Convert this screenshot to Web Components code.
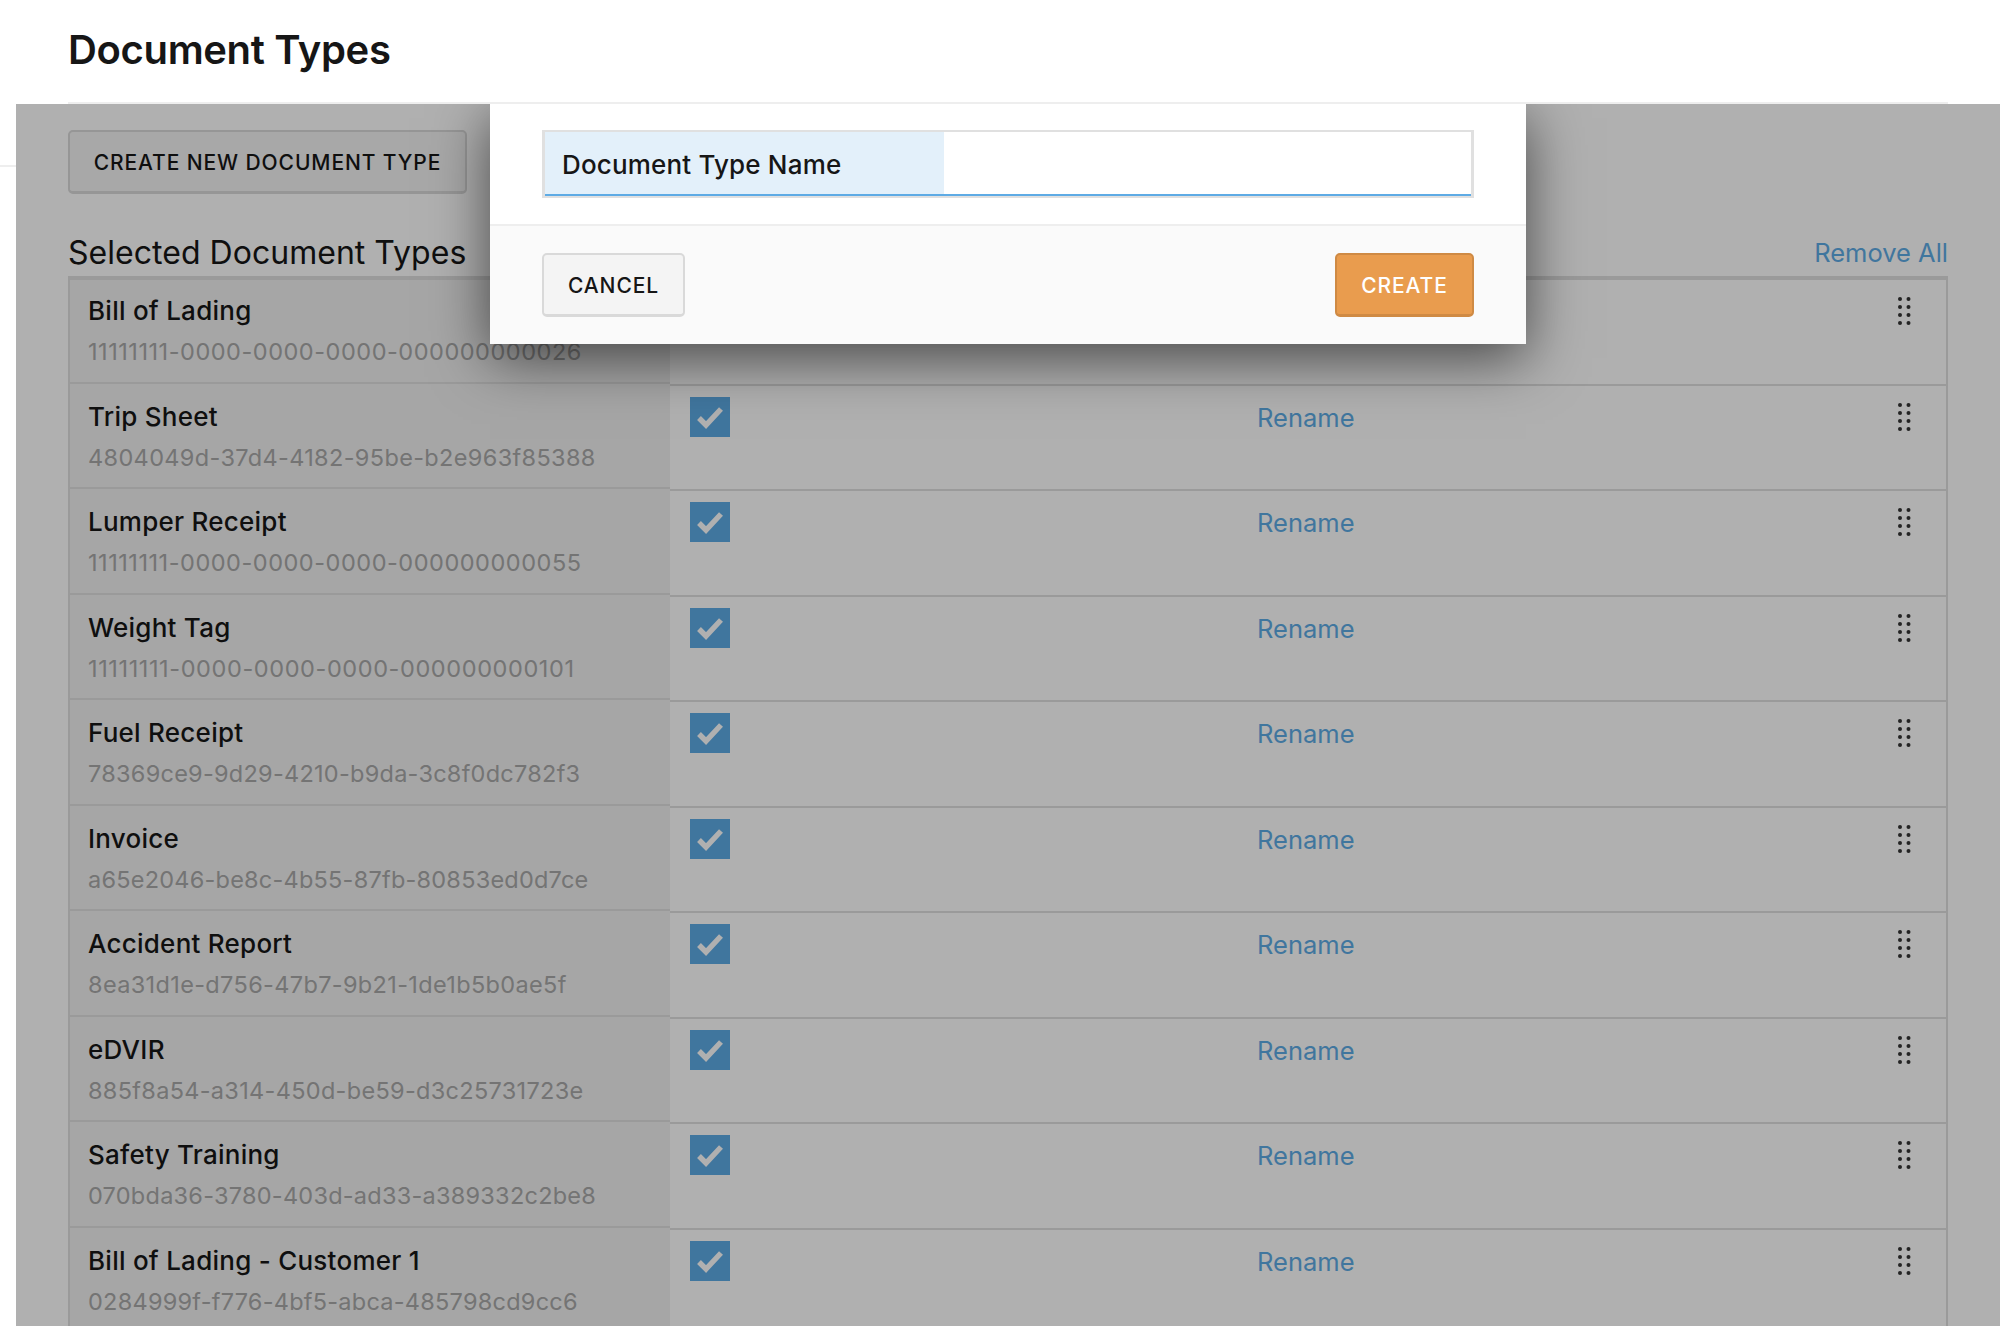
<!DOCTYPE html>
<html lang="en"><head><meta charset="utf-8"><title>Document Types</title>
<style>
html,body{margin:0;padding:0;background:#fff}
body{width:2000px;height:1326px;overflow:hidden;position:relative;font-family:Inter,"Liberation Sans",sans-serif;color:#161616}
</style></head><body>
<doc-page>
  <doc-row slot="rows" name="Bill of Lading" ls=".53" uid="11111111-0000-0000-0000-000000000026"></doc-row>
  <doc-row slot="rows" name="Trip Sheet" ls=".35" uid="4804049d-37d4-4182-95be-b2e963f85388"></doc-row>
  <doc-row slot="rows" name="Lumper Receipt" ls=".53" uid="11111111-0000-0000-0000-000000000055"></doc-row>
  <doc-row slot="rows" name="Weight Tag" ls=".6" uid="11111111-0000-0000-0000-000000000101"></doc-row>
  <doc-row slot="rows" name="Fuel Receipt" ls=".26" uid="78369ce9-9d29-4210-b9da-3c8f0dc782f3"></doc-row>
  <doc-row slot="rows" name="Invoice" ls=".23" uid="a65e2046-be8c-4b55-87fb-80853ed0d7ce"></doc-row>
  <doc-row slot="rows" name="Accident Report" ls=".35" uid="8ea31d1e-d756-47b7-9b21-1de1b5b0ae5f"></doc-row>
  <doc-row slot="rows" name="eDVIR" ls=".31" uid="885f8a54-a314-450d-be59-d3c25731723e"></doc-row>
  <doc-row slot="rows" name="Safety Training" ls=".25" uid="070bda36-3780-403d-ad33-a389332c2be8"></doc-row>
  <doc-row slot="rows" name="Bill of Lading - Customer 1" ls=".25" uid="0284999f-f776-4bf5-abca-485798cd9cc6"></doc-row>
  <create-modal slot="modal"></create-modal>
</doc-page>
<script>
const tpl = s => { const t = document.createElement('template'); t.innerHTML = s; return t; };
class Base extends HTMLElement {
  connectedCallback(){
    if(this.shadowRoot) return;
    this.attachShadow({mode:'open'}).appendChild(this.constructor.t.content.cloneNode(true));
    this.init && this.init();
  }
}
class AppButton extends Base {
  static t = tpl(`<style>
    :host{display:inline-flex;box-sizing:border-box;height:64px;padding-top:2px;align-items:center;justify-content:center;
      background:var(--bg,#f4f4f4);border:2px solid var(--bd,#d9d9d9);border-bottom-width:3px;border-radius:5px;
      color:var(--fg,#161616);font:500 21px/1 Inter,"Liberation Sans",sans-serif;letter-spacing:.9px;white-space:nowrap}
  </style><slot></slot>`);
}
customElements.define('app-button', AppButton);
class DragDots extends Base {
  static t = tpl(`<style>:host{display:block;width:16px;height:32px}svg{display:block}</style>
  <svg width="16" height="32" viewBox="0 0 16 32" fill="#333">
    <circle cx="3" cy="3" r="2"/><circle cx="11.5" cy="3" r="2"/>
    <circle cx="3" cy="11" r="2"/><circle cx="11.5" cy="11" r="2"/>
    <circle cx="3" cy="19" r="2"/><circle cx="11.5" cy="19" r="2"/>
    <circle cx="3" cy="27" r="2"/><circle cx="11.5" cy="27" r="2"/>
  </svg>`);
}
customElements.define('drag-dots', DragDots);
class CheckBox extends Base {
  static t = tpl(`<style>:host{display:block;width:40px;height:40px;background:#5eabe5}svg{display:block}</style>
  <svg width="40" height="40" viewBox="0 0 40 40"><path d="M9 21l7 7 15-16" fill="none" stroke="#fff" stroke-width="5.4"/></svg>`);
}
customElements.define('check-box', CheckBox);
class DocRow extends Base {
  static t = tpl(`<style>
    :host{display:flex;height:105.5px;box-sizing:border-box}
    .l{width:600px;flex:none;background:#f1f1f1;padding-bottom:2px;box-sizing:border-box;display:flex}
    .li{flex:1;border-bottom:2px solid #dfdfdf;padding:14px 18px 0;box-sizing:border-box}
    .n{font-size:26px;line-height:34px;font-weight:500;letter-spacing:.25px;color:#161616;white-space:nowrap}
    .u{font-size:23.5px;line-height:30px;margin-top:9px;color:#a8a8a8;white-space:nowrap}
    .r{flex:1;border-bottom:2px solid #dfdfdf;display:flex;align-items:flex-start;box-sizing:border-box;padding:11px 33px 0 20px}
    .link{margin-left:527px;margin-top:3px;font-size:25.5px;line-height:36px;color:#5eabe5}
    drag-dots{margin-left:auto;margin-top:5px}
  </style>
  <div class="l"><div class="li"><div class="n"></div><div class="u"></div></div></div>
  <div class="r"><check-box></check-box><span class="link">Rename</span><drag-dots></drag-dots></div>`);
  init(){
    const s=this.shadowRoot;
    s.querySelector('.n').textContent=this.getAttribute('name');
    const u=s.querySelector('.u');
    u.textContent=this.getAttribute('uid');
    u.style.letterSpacing=this.getAttribute('ls')+'px';
  }
}
customElements.define('doc-row', DocRow);
class CreateModal extends Base {
  static t = tpl(`<style>
    :host{position:absolute;left:474px;top:0;width:1036px;height:240px;background:#fff;box-shadow:0 14px 54px rgba(0,0,0,.6);display:flex;flex-direction:column}
    .top{height:122px;padding:26px 52px 0;box-sizing:border-box;border-bottom:2px solid #eee}
    .field{height:68px;box-sizing:border-box;border:3px solid #e0e0e0;border-bottom-width:2px;border-top-width:2px;display:flex;position:relative}
    .lab{width:399px;background:#e3f0fa;border-bottom:2px solid #5eabe5;box-sizing:border-box;padding-left:17px;font-size:26px;letter-spacing:.17px;font-weight:500;line-height:66px;color:#161616}
    .inp{flex:1;border-bottom:2px solid #5eabe5}
    .bot{flex:1;background:#fafafa;padding:27px 52px 0;display:flex;justify-content:space-between;align-items:flex-start}
    .c{width:143px}
    .g{width:139px;--bg:#e99c4e;--bd:#cf8a44;--fg:#fff}
  </style>
  <div class="top"><div class="field"><div class="lab">Document Type Name</div><div class="inp"></div></div></div>
  <div class="bot"><app-button class="c">CANCEL</app-button><app-button class="g">CREATE</app-button></div>`);
}
customElements.define('create-modal', CreateModal);
class DocPage extends Base {
  static t = tpl(`<style>
    :host{display:block;position:relative;width:2000px;height:1326px;overflow:hidden}
    header{margin:0 52px 0 68px;height:104px;box-sizing:border-box;border-bottom:2px solid #eee;display:flex;align-items:flex-start}
    h1{margin:22px 0 0;font-size:40px;line-height:56px;font-weight:600;letter-spacing:-.35px;color:#161616;white-space:nowrap}
    .side{position:absolute;left:0;top:165px;width:16px;height:2px;background:#eee}
    main{padding:26px 52px 0 68px}
    .new{width:399px}
    .sub{display:flex;justify-content:space-between;align-items:flex-start;margin-top:36px;height:46px}
    h2{margin:0;font-size:32px;line-height:45px;font-weight:400;letter-spacing:.03px;color:#161616;white-space:nowrap}
    .all{font-size:25.5px;line-height:36px;color:#5eabe5;margin-top:5px}
    .tbl{border:2px solid #dfdfdf;border-top-width:4px;}
    .ov{position:absolute;left:16px;top:104px;right:0;bottom:0;background:rgba(0,0,0,.31);overflow:hidden}
  </style>
  <header><h1>Document Types</h1></header>
  <div class="side"></div>
  <main>
    <app-button class="new">CREATE NEW DOCUMENT TYPE</app-button>
    <div class="sub"><h2>Selected Document Types</h2><span class="all">Remove All</span></div>
    <div class="tbl"><slot name="rows"></slot></div>
  </main>
  <div class="ov"><slot name="modal"></slot></div>`);
}
customElements.define('doc-page', DocPage);
</script>
</body></html>
